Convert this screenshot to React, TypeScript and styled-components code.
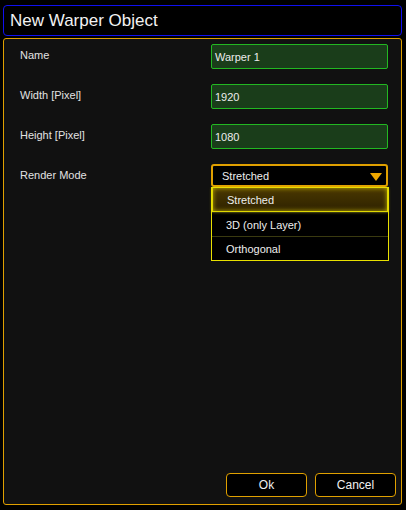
import React from 'react';
import styled, { createGlobalStyle } from 'styled-components';

const GlobalStyle = createGlobalStyle`
  html, body {
    margin: 0;
    padding: 0;
    background: #000;
  }
  body {
    font-family: "Liberation Sans", Arial, sans-serif;
    color: #e6e6e6;
  }
`;

const Screen = styled.div`
  width: 406px;
  height: 510px;
  box-sizing: border-box;
  padding: 5px 4px 5px 3px;
  display: flex;
  flex-direction: column;
  gap: 2px;
`;

const TitleBar = styled.div`
  height: 31px;
  box-sizing: border-box;
  border: 1.5px solid #1010f0;
  border-radius: 4px;
  background: #000;
  display: flex;
  align-items: center;
  padding-left: 6px;
  font-size: 17px;
  color: #f2f2f2;
`;

const Panel = styled.div`
  flex: 1;
  box-sizing: border-box;
  border: 1px solid #e0a000;
  border-radius: 3px;
  background: #111;
  padding: 5px 5px 7px 16px;
  display: flex;
  flex-direction: column;
`;

const Form = styled.div`
  display: flex;
  flex-direction: column;
  gap: 15px;
  padding-right: 8px;
`;

const Row = styled.div`
  display: grid;
  grid-template-columns: 191px 1fr;
  height: 25px;
`;

const Label = styled.div`
  font-size: 11px;
  line-height: 13px;
  padding-top: 5px;
  color: #e2e2e2;
`;

const TextBox = styled.div`
  box-sizing: border-box;
  height: 25px;
  border: 1px solid #22b822;
  border-radius: 2px;
  background: #1a3d1a;
  display: flex;
  align-items: center;
  padding-left: 3px;
  font-size: 11px;
  color: #ececec;
`;

const SelectWrap = styled.div`
  position: relative;
  height: 23px;
`;

const SelectBox = styled.div`
  box-sizing: border-box;
  height: 23px;
  border: 2px solid #e0a000;
  border-radius: 3px;
  background: #000;
  display: flex;
  align-items: center;
  justify-content: space-between;
  padding: 0 4px 0 9px;
  font-size: 11px;
  color: #eee;
`;

const Arrow = styled.svg`
  width: 12px;
  height: 9px;
  margin-top: 3px;
`;

const List = styled.div`
  position: absolute;
  top: 23px;
  left: 0;
  right: -1px;
  box-sizing: border-box;
  border: 1px solid #e8e000;
  background: #000;
  display: flex;
  flex-direction: column;
`;

const Item = styled.div<{ $active?: boolean }>`
  height: 24px;
  box-sizing: border-box;
  display: flex;
  align-items: center;
  padding-left: 14px;
  font-size: 11px;
  color: #eee;
  border-top: 1px solid ${p => (p.$active ? 'transparent' : '#3a3a10')};
  &:first-child {
    border-top: none;
  }
  ${p =>
    p.$active &&
    `
    border: 1px solid #e0d800;
    background: linear-gradient(#4a3800, #2e2200);
    box-shadow: inset 0 0 5px rgba(235, 215, 0, 0.75), 0 0 3px rgba(235, 215, 0, 0.6);
  `}
`;

const Footer = styled.div`
  margin-top: auto;
  display: flex;
  justify-content: flex-end;
  gap: 8px;
`;

const Button = styled.div`
  width: 81px;
  height: 24px;
  box-sizing: border-box;
  border: 1px solid #e0a000;
  border-radius: 4px;
  background: #000;
  display: flex;
  align-items: center;
  justify-content: center;
  font-size: 12px;
  color: #f0f0f0;
`;

const fields = [
  { label: 'Name', value: 'Warper 1' },
  { label: 'Width [Pixel]', value: '1920' },
  { label: 'Height [Pixel]', value: '1080' },
];

const modes = ['Stretched', '3D (only Layer)', 'Orthogonal'];

export default function App() {
  return (
    <>
      <GlobalStyle />
      <Screen>
        <TitleBar>New Warper Object</TitleBar>
        <Panel>
          <Form>
            {fields.map(f => (
              <Row key={f.label}>
                <Label>{f.label}</Label>
                <TextBox>{f.value}</TextBox>
              </Row>
            ))}
            <Row>
              <Label>Render Mode</Label>
              <SelectWrap>
                <SelectBox>
                  Stretched
                  <Arrow viewBox="0 0 12 9">
                    <polygon points="0,0 12,0 6,8" fill="#f0a800" />
                  </Arrow>
                </SelectBox>
                <List>
                  {modes.map((m, i) => (
                    <Item key={m} $active={i === 0}>
                      {m}
                    </Item>
                  ))}
                </List>
              </SelectWrap>
            </Row>
          </Form>
          <Footer>
            <Button>Ok</Button>
            <Button>Cancel</Button>
          </Footer>
        </Panel>
      </Screen>
    </>
  );
}
